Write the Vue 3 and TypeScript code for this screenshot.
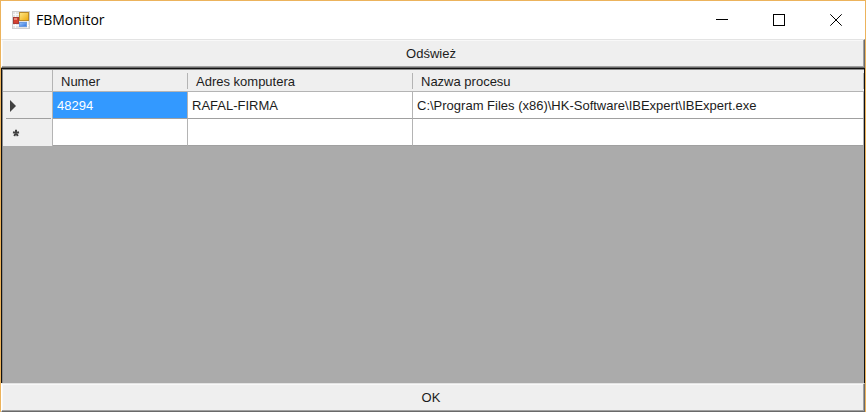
<script setup lang="ts">
import { ref } from 'vue'

interface ProcessRow {
  id: number
  computer: string
  process: string
}

const columns: string[] = ['Numer', 'Adres komputera', 'Nazwa procesu']

const rows = ref<ProcessRow[]>([
  {
    id: 48294,
    computer: 'RAFAL-FIRMA',
    process: 'C:\\Program Files (x86)\\HK-Software\\IBExpert\\IBExpert.exe',
  },
])

const selectedId = ref<number>(48294)
</script>

<template>
  <main class="window">
    <header class="titlebar">
      <svg class="app-icon" viewBox="0 0 18 18" aria-hidden="true">
        <defs>
          <linearGradient id="gold" x1="0" y1="0" x2="1" y2="1">
            <stop offset="0" stop-color="#ffe98a" />
            <stop offset="1" stop-color="#eda90c" />
          </linearGradient>
          <linearGradient id="blue" x1="0" y1="0" x2="1" y2="1">
            <stop offset="0" stop-color="#9cc6fb" />
            <stop offset="1" stop-color="#3274dc" />
          </linearGradient>
        </defs>
        <rect x="0.5" y="0.5" width="17" height="17" fill="#e4e4e4" stroke="#cfcfcf" />
        <path d="M1 3.5H7M3.5 1V6M1 14.5H17M3.5 12V17M15.5 10V17" stroke="#fafafa" fill="none" />
        <rect x="7.5" y="1.5" width="9" height="8" fill="url(#gold)" stroke="#b98a2a" />
        <rect x="1.5" y="6.5" width="5" height="6" fill="#d5402f" stroke="#a83a34" />
        <rect x="2" y="7" width="3" height="2" fill="#ea8a78" />
        <rect x="7.5" y="11.5" width="7" height="4" fill="url(#blue)" stroke="#6b9be0" />
      </svg>
      <h1 class="title">FBMonitor</h1>
      <div class="controls">
        <button class="control" type="button" aria-label="Minimalizuj">
          <svg viewBox="0 0 12 12"><path d="M0 5.5H12" /></svg>
        </button>
        <button class="control" type="button" aria-label="Maksymalizuj">
          <svg viewBox="0 0 12 12"><rect x="0.5" y="0.5" width="11" height="11" /></svg>
        </button>
        <button class="control" type="button" aria-label="Zamknij">
          <svg class="smooth" viewBox="0 0 12 12"><path d="M0.3 0.3L11.7 11.7M11.7 0.3L0.3 11.7" /></svg>
        </button>
      </div>
    </header>

    <button class="bar" type="button">Odśwież</button>

    <section class="grid">
      <table>
        <colgroup>
          <col class="col-marker" />
          <col class="col-number" />
          <col class="col-address" />
          <col />
        </colgroup>
        <thead>
          <tr>
            <td class="corner"></td>
            <th v-for="name in columns" :key="name" scope="col">{{ name }}</th>
          </tr>
        </thead>
        <tbody>
          <tr v-for="row in rows" :key="row.id" @click="selectedId = row.id">
            <td class="marker">
              <svg v-if="row.id === selectedId" class="arrow" viewBox="0 0 6 12" aria-hidden="true">
                <path d="M0 0L6 6L0 12Z" />
              </svg>
            </td>
            <td :class="{ selected: row.id === selectedId }">{{ row.id }}</td>
            <td>{{ row.computer }}</td>
            <td>{{ row.process }}</td>
          </tr>
          <tr>
            <td class="marker">
              <svg class="star" viewBox="0 0 8 8" aria-hidden="true">
                <path d="M4 0.8V4M1 3.2L4 4L7 3.2M2.2 7L4 4L5.8 7" />
              </svg>
            </td>
            <td></td>
            <td></td>
            <td></td>
          </tr>
        </tbody>
      </table>
    </section>

    <button class="bar" type="button">OK</button>
  </main>
</template>

<style>
body {
  margin: 0;
}
</style>

<style scoped>
.window {
  box-sizing: border-box;
  min-height: 100vh;
  display: flex;
  flex-direction: column;
  border: 1px solid #ecb35c;
  border-bottom: 0;
  background: #fff;
  color: #1c1c1c;
  font-family: "Liberation Sans", Arial, sans-serif;
  font-size: 13px;
}

.titlebar {
  display: flex;
  align-items: center;
  height: 38px;
  padding-left: 11px;
}

.app-icon {
  width: 18px;
  height: 18px;
}

.title {
  flex: 1;
  margin: 0;
  padding-left: 6px;
  color: #000;
  font-family: "Open Sans", "Noto Sans", sans-serif;
  font-size: 14px;
  font-weight: 400;
  line-height: 20px;
}

.controls {
  display: flex;
  height: 100%;
  padding-right: 1px;
}

.control {
  display: grid;
  place-items: center;
  width: 57px;
  padding: 0;
  border: 0;
  background: none;
}

.control svg {
  width: 12px;
  height: 12px;
  fill: none;
  stroke: #000;
  shape-rendering: crispEdges;
}

.control .smooth {
  shape-rendering: auto;
}

.bar {
  height: 29px;
  padding: 0 4px 0 0;
  border: 1px solid;
  border-color: #e3e3e3 #696969 #696969 #fff;
  box-shadow: inset -1px -1px #a0a0a0, inset 1px 1px #f8f8f8;
  background: #efefef;
  color: inherit;
  font: inherit;
}

.grid {
  flex: 1;
  border: solid #111;
  border-width: 1px 1px 0;
  box-shadow: inset 1px 1px #8c8c8c;
  padding: 1px 0 0 1px;
  background: #ababab;
}

table {
  width: 100%;
  table-layout: fixed;
  border-spacing: 0;
}

.col-marker {
  width: 50px;
}

.col-number {
  width: 135px;
}

.col-address {
  width: 225px;
}

th,
td {
  box-sizing: border-box;
  padding: 0 4px;
  border: solid #b4b4b4;
  border-width: 0 1px 1px 0;
  overflow: hidden;
  text-align: left;
  font-weight: 400;
  white-space: nowrap;
}

thead th,
thead td {
  height: 22px;
  padding: 2px 8px 0;
  background: #efefef;
}

thead th {
  border-right: 0;
  background: linear-gradient(#b4b4b4, #b4b4b4) right 3px / 1px 16px no-repeat #efefef;
}

tbody td {
  height: 27px;
  border-bottom-color: #a0a0a0;
  background: #fff;
}

tbody .selected {
  background: #3399ff;
  color: #fff;
}

tbody .marker {
  padding: 0 7px;
  border-bottom: 0;
  background: linear-gradient(#a0a0a0, #a0a0a0) 3px bottom / 45px 1px no-repeat #efefef;
}

tbody tr:last-child .marker {
  background: #efefef;
}

.marker svg {
  display: block;
}

.arrow {
  width: 6px;
  height: 12px;
  fill: #404040;
}

.star {
  width: 8px;
  height: 8px;
  margin-left: 2px;
  fill: none;
  stroke: #404040;
  stroke-width: 2;
}
</style>
